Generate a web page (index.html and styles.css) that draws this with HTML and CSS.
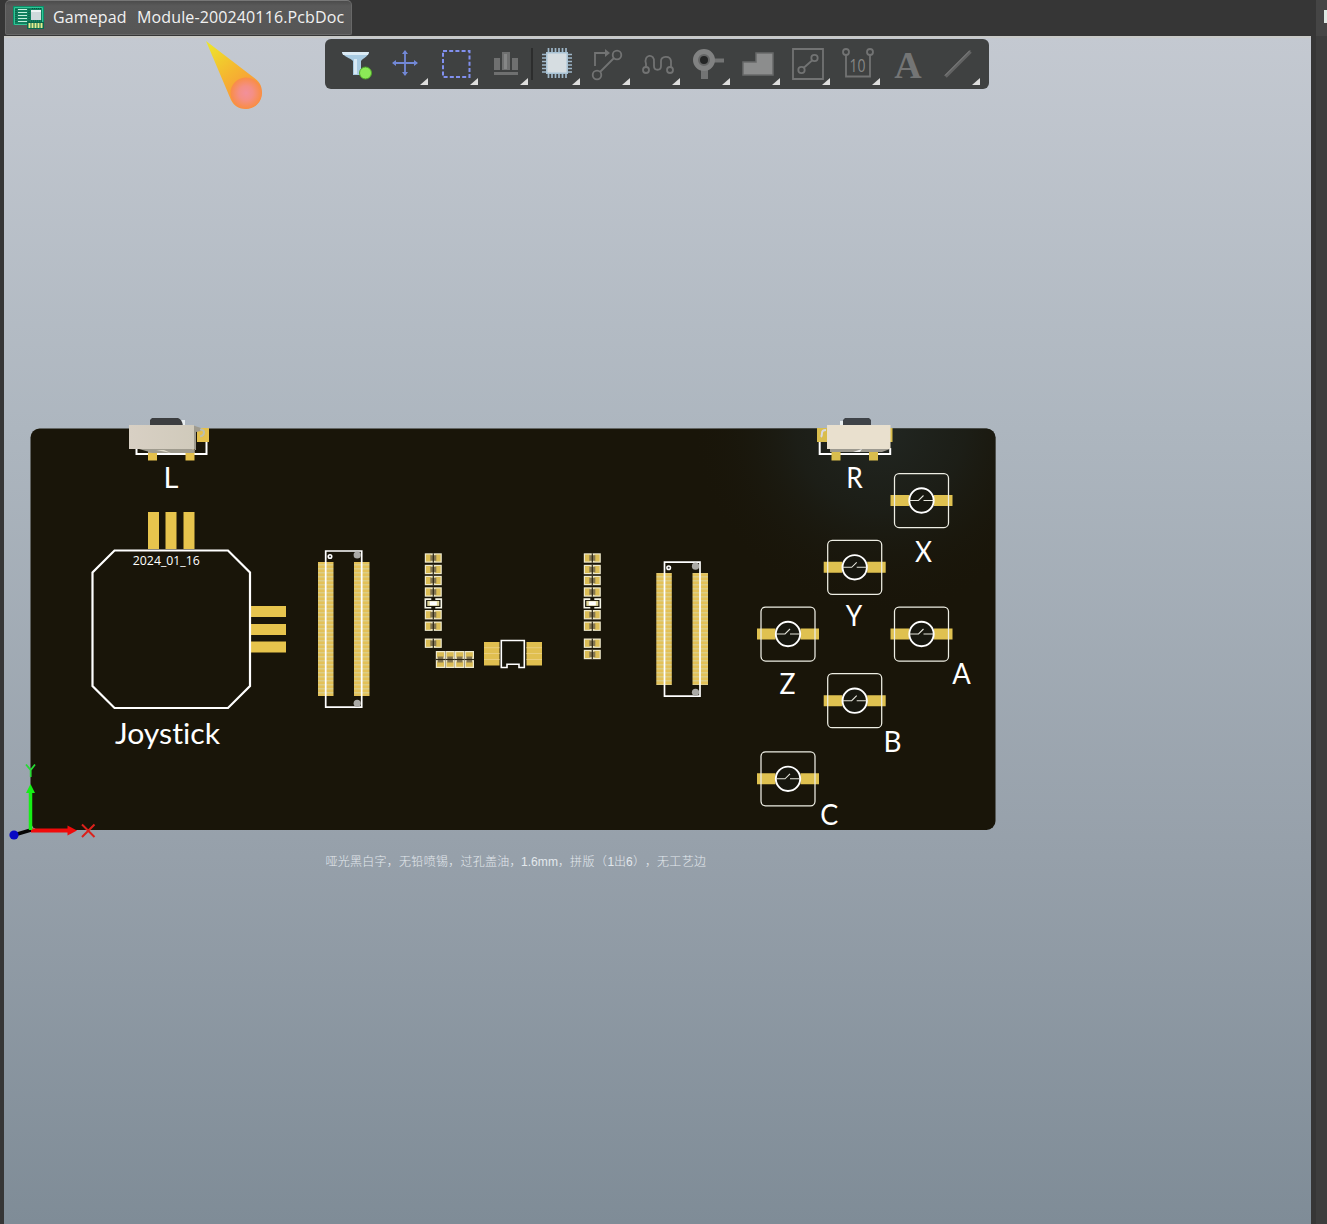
FILE: index.html
```html
<!DOCTYPE html>
<html lang="zh-CN">
<head>
<meta charset="utf-8">
<title>Gamepad Module-200240116.PcbDoc</title>
<link rel="stylesheet" href="styles.css">
</head>
<body>
<div class="window">
  <header class="tabbar">
    <div class="tab">
      <svg class="tab-icon" width="32" height="26" viewBox="0 0 32 26">
        <path d="M0 1h31v23H15v-4H0z" fill="#0b8f69"/>
        <path d="M1.500 2.500h28v17h-28z" fill="#12805f" stroke="#31c596"/>
        <path d="M5 4.500h9M5 7.500h9M5 10.500h9M5 13.500h9M5 16.500h9" stroke="#c5f0de"/>
        <path d="M3 4v14M16 4v14M19 3.500h10M18 16h12" stroke="#0a4f3d" stroke-dasharray="1 1"/>
        <path d="M18 5h10v10H18z" fill="#cfd9dc"/><path d="M18 5h10v2H18z" fill="#eef3f4"/>
        <path d="M14 17h17v7H14z" fill="#07694f"/>
        <path d="M16.500 18v5M19.500 18v5M22.500 18v5M25.500 18v5M28.500 18v5" stroke="#e5ee8e" stroke-width="2"/>
      </svg>
      <span class="tab-name">Gamepad</span>
      <span class="tab-file">Module-200240116.PcbDoc</span>
    </div>
    <div class="side-cap"><i class="side-mark"></i></div>
  </header>

  <main class="workspace">
    <section class="viewport">
      <svg class="scene" width="1307" height="1188" viewBox="4 36 1307 1188">
        <defs>
          <radialGradient id="sheen" gradientUnits="userSpaceOnUse" cx="880" cy="425" r="190">
            <stop offset="0" stop-color="#222723"/><stop offset=".45" stop-color="#1d201a" stop-opacity=".8"/><stop offset="1" stop-color="#191509" stop-opacity="0"/>
          </radialGradient>
          <linearGradient id="flame" gradientUnits="userSpaceOnUse" x1="206" y1="41" x2="250" y2="100">
            <stop offset="0" stop-color="#ece92a"/><stop offset=".55" stop-color="#f5b630"/><stop offset="1" stop-color="#f98f3e"/>
          </linearGradient>
          <radialGradient id="ember"><stop offset="0" stop-color="#f2909a"/><stop offset=".45" stop-color="#f48f85"/><stop offset="1" stop-color="#f98d45"/></radialGradient>
          <linearGradient id="body-l" x2="1" y2="0"><stop offset="0" stop-color="#d8d0c4"/><stop offset="1" stop-color="#d0cabb"/></linearGradient>
          <pattern id="pins" width="16" height="4" patternUnits="userSpaceOnUse">
            <path d="M0 0h16v4H0z" fill="#e3c158"/><path d="M0 0h16v1.500H0z" fill="#dccd86"/>
          </pattern>
          <g id="chip-part">
            <path d="M-8.500-4.700h17v9.400h-17z" fill="#eee9cc"/>
            <path d="M-7.300-3.500h5.300v7h-5.300zM2-3.500h5.300v7H2z" fill="#dbbd56"/>
            <path d="M-3-2.800h6v5.600h-6z" fill="#837551"/>
            <path d="M0-4.700V4.700" stroke="#2b2514" stroke-width="1.200"/>
          </g>
          <g id="diode-part">
            <path d="M-2-4.300h-6v8.600h6M2-4.300h6v8.600H2" fill="none" stroke="#f5f5e8" stroke-width="1.600"/>
            <path d="M-6-2.500H6v5H-6z" fill="#e1d79c"/><path d="M-3.500-2h7v4h-7z" fill="#fff"/>
          </g>
          <g id="resistors">
            <use href="#chip-part" y="558"/><use href="#chip-part" y="569.500"/><use href="#chip-part" y="580.500"/><use href="#chip-part" y="592"/>
            <use href="#diode-part" y="603.400"/><use href="#chip-part" y="614.700"/><use href="#chip-part" y="626.200"/><use href="#chip-part" y="643.200"/>
          </g>
          <g id="push-button">
            <path d="M-31-5.500h18.500v11H-31zM12.500-5.500H31v11H12.500z" fill="#dfc150"/>
            <rect x="-27" y="-27" width="54" height="54" rx="4.500" fill="none" stroke="#eeeee4" stroke-width="1.250"/>
            <circle r="12.200" fill="#17170f" stroke="#fff" stroke-width="1.900"/>
            <path d="M-12 0h9L2-5M2 0h10" fill="none" stroke="#e5e5dc" stroke-width="1.100"/>
          </g>
        </defs>

        <path d="M4 36h1307v2H4z" fill="#c9cac8"/>
        <path d="M206 41L255 78.500C261 83 262 88 262 93A16 16 0 0 1 246 109C239 109 234 106 231 100Z" fill="url(#flame)"/>
        <circle cx="246" cy="93" r="15.500" fill="url(#ember)"/>

        <rect x="30.500" y="428.500" width="965" height="401.500" rx="9" fill="#191509"/>
        <rect x="30.500" y="428.500" width="965" height="401.500" rx="9" fill="url(#sheen)"/>

        <g class="switch-left">
          <path d="M136.500 447v7h70v-14" fill="none" stroke="#fff" stroke-width="2"/>
          <path d="M197 428h12v14h-12zM148 452h9v8.500h-9zM185.500 452h9v8.500h-9z" fill="#e4c04c"/>
          <path d="M148 449h9v4h-9zM185.500 449h9v4h-9z" fill="#b8aa8c"/>
          <path d="M180 420h5v6h-5z" fill="#e8edef"/>
          <path d="M150 426v-6l2-2h26q4 1 5 8z" fill="#3c3e40"/>
          <path d="M139 449l14 4h41l1-4zM192 425l9 3v3l-5 1v18h-4z" fill="#9f9b8e"/>
          <path d="M156 450h8l7 3z" fill="#ddd8c8"/>
          <path d="M129 425h65v24h-65z" fill="url(#body-l)"/>
          <path d="M200 429.500q4 0 4 3t-4 4" fill="none" stroke="#bcbfae" stroke-width="2"/>
        </g>
        <g class="switch-right">
          <path d="M819.700 440v14h70.500v-6" fill="none" stroke="#fff" stroke-width="2"/>
          <path d="M817 428h12v14h-12zM888 428h4.500v14H888zM831.500 452h9v8.500h-9zM869 452h9v8.500h-9z" fill="#d9bd4d"/>
          <path d="M831.500 449h9v3h-9zM869 449h9v3h-9z" fill="#b5a274"/>
          <path d="M840 421h5v5h-5z" fill="#e8edef"/>
          <path d="M843 426v-6l2-2h24l2 2v6z" fill="#3f4348"/>
          <path d="M830 449v3h52l8-3z" fill="#9d9a90"/>
          <path d="M853 452l9-3-2 3z" fill="#eee"/>
          <path d="M827 425h63.500v24H827z" fill="#e9e0ce"/>
          <path d="M826 430q-4 0-4 3t-1 4" fill="none" stroke="#d8d8e0" stroke-width="2"/>
        </g>

        <path d="M148 512h11v37h-11zM165.500 512h11v37h-11zM183.500 512h11v37h-11zM249 606h37v11h-37zM249 624h37v11h-37zM249 641.500h37v11h-37z" fill="#e7c44d"/>
        <path d="M114.500 550.500h113.500l22 22v113.500l-22 22H114.500l-22-22V572.500z" fill="none" stroke="#fff" stroke-width="2.200"/>

        <g class="connector">
          <path d="M318 562h15.500v134H318zM354 562h15.500v134H354z" fill="url(#pins)"/>
          <path d="M325.700 551h36v156.200h-36z" fill="none" stroke="#fff" stroke-width="1.700"/>
          <circle cx="330" cy="556.500" r="1.800" fill="#333" stroke="#fff" stroke-width="1.500"/>
          <circle cx="357.200" cy="555" r="3.600" fill="#aaa9a5"/><circle cx="357.200" cy="703.300" r="3.600" fill="#aaa9a5"/>
        </g>
        <g class="connector">
          <path d="M656.300 573h15.500v112h-15.500zM692.500 573H708v112h-15.500z" fill="url(#pins)"/>
          <path d="M664.500 562.200H700v134h-35.500z" fill="none" stroke="#fff" stroke-width="1.700"/>
          <circle cx="668.700" cy="567.700" r="1.800" fill="#333" stroke="#fff" stroke-width="1.500"/>
          <circle cx="695.500" cy="566.200" r="3.600" fill="#aaa9a5"/><circle cx="695.500" cy="692.300" r="3.600" fill="#aaa9a5"/>
        </g>

        <use href="#resistors" x="433.300"/>
        <use href="#resistors" x="592.300"/><use href="#chip-part" x="592.300" y="654.500"/>
        <g transform="translate(440.500 659.500) rotate(90)">
          <use href="#chip-part"/><use href="#chip-part" y="-9.600"/><use href="#chip-part" y="-19.200"/><use href="#chip-part" y="-28.800"/>
        </g>
        <path d="M484 642h15.500v23.500H484zM526.500 642H542v23.500h-15.500z" fill="#e0bf50"/>
        <path d="M484 647.700h15.500M484 653.500h15.500M484 659.500h15.500M526.500 647.700H542M526.500 653.500H542M526.500 659.500H542" stroke="#eace7c"/>
        <path d="M501.300 640.500h23v27h-5.300v-3.200h-12v3.200h-5.700z" fill="#17150a" stroke="#fff" stroke-width="1.600"/>

        <use href="#push-button" x="921.500" y="500.500"/>
        <use href="#push-button" x="854.700" y="567.300"/>
        <use href="#push-button" x="788" y="634"/>
        <use href="#push-button" x="921.500" y="634"/>
        <use href="#push-button" x="854.700" y="700.700"/>
        <use href="#push-button" x="788" y="778.800"/>

        <g class="silk">
          <text x="171" y="488">L</text>
          <text x="854.500" y="488" textLength="16.500" lengthAdjust="spacingAndGlyphs">R</text>
          <text x="923.500" y="561.500" textLength="17" lengthAdjust="spacingAndGlyphs">X</text>
          <text x="854" y="626" textLength="16.500" lengthAdjust="spacingAndGlyphs">Y</text>
          <text x="787.500" y="693.500" textLength="16" lengthAdjust="spacingAndGlyphs">Z</text>
          <text x="961.500" y="684" textLength="18.500" lengthAdjust="spacingAndGlyphs">A</text>
          <text x="892.500" y="752" textLength="18" lengthAdjust="spacingAndGlyphs">B</text>
          <text x="829.300" y="825" textLength="18" lengthAdjust="spacingAndGlyphs">C</text>
          <text x="167.500" y="743.500" textLength="105" lengthAdjust="spacingAndGlyphs">Joystick</text>
          <text class="date" x="166.300" y="564.500" textLength="67" lengthAdjust="spacingAndGlyphs">2024_01_16</text>
        </g>

        <g class="axes" fill="none">
          <path d="M31 830L14 835" stroke="#050505" stroke-width="3.500"/><circle cx="14" cy="835" r="4.600" fill="#0808c4"/>
          <path d="M31 830.500h38" stroke="#f00b0b" stroke-width="4"/><path d="M67.500 825.500l9.500 5-9.500 5z" fill="#f00b0b"/>
          <path d="M30.500 830v-38" stroke="#16ee16" stroke-width="3.500"/><path d="M26 793l4.500-9 4.500 9z" fill="#16ee16"/>
          <path d="M26 764.500l4.700 5.500 4.300-5.500M30.700 770v7" stroke="#27da35" stroke-width="1.800"/>
          <path d="M82 824.500L94.500 837M94.500 824.500L82 837" stroke="#dc211b" stroke-width="2"/>
        </g>

        <text class="note" y="865.500"><tspan x="325.500" textLength="196">哑光黑白字，无铅喷锡，过孔盖油，</tspan><tspan x="521" textLength="37" lengthAdjust="spacingAndGlyphs">1.6mm</tspan><tspan x="558">，</tspan><tspan x="570" textLength="37">拼版（</tspan><tspan x="607.500">1</tspan><tspan x="614">出</tspan><tspan x="626">6</tspan><tspan x="633">）</tspan><tspan x="645">，</tspan><tspan x="657" textLength="49">无工艺边</tspan></text>
      </svg>

      <nav class="toolbar">
        <svg class="tool" viewBox="0 0 50 50"><path d="M11 13h27c-1 5-6 6-8 9v14h-8V22c-2-3-10-4-11-9z" fill="#a9cbe2"/><path d="M11 13h27l-1 3H12z" fill="#dcebf5"/><path d="M23 20h3v15h-3z" fill="#d8e9f4"/><circle cx="34.500" cy="34" r="6" fill="#8bea57" stroke="#51a62b"/></svg>
        <svg class="tool" viewBox="0 0 50 50"><path d="M12 24h24M24 12v24" stroke="#7288d6" stroke-width="1.800"/><path d="M11 24l4-3v6zM37 24l-4-3v6zM24 11l-3 4h6zM24 37l-3-4h6z" fill="#7288d6"/><path class="more" d="M47 39v7h-8z"/></svg>
        <svg class="tool" viewBox="0 0 50 50"><path d="M12 12h26.500v26H12z" fill="none" stroke="#8190ee" stroke-width="2" stroke-dasharray="4 2.200"/><path class="more" d="M47 39v7h-8z"/></svg>
        <svg class="tool" viewBox="0 0 50 50"><path d="M13 19h6v12h-6zM21 13h8v18h-8zM31 19h6v12h-6zM13 33h24v3H13z" fill="#6f7070"/><path d="M23 15h3v15h-3z" fill="#858686"/><path class="more" d="M47 39v7h-8z"/></svg>
        <i class="divider"></i>
        <svg class="tool" viewBox="0 0 50 50"><path d="M15.500 9v30M19 9v30M22.500 9v30M26 9v30M29.500 9v30M33 9v30M9 15.500h30M9 19h30M9 22.500h30M9 26h30M9 29.500h30M9 33h30" stroke="#9fb7c9" stroke-width="1.700"/><path d="M13 13h22v22H13z" fill="#a9c3d5"/><path d="M14.500 14.500h19v19h-19z" fill="#d6dde1"/><path class="more" d="M47 39v7h-8z"/></svg>
        <svg class="tool" viewBox="0 0 50 50"><g class="line"><circle cx="14" cy="36" r="4.300"/><circle cx="34" cy="16" r="4.300"/><path d="M17 33L31 19M12 27V14h12"/></g><path d="M22 10l5 4-5 4z" fill="#727373"/><path class="more" d="M47 39v7h-8z"/></svg>
        <svg class="tool" viewBox="0 0 50 50"><g class="line"><circle cx="13" cy="31" r="3"/><circle cx="37" cy="31" r="3"/><path d="M13 28v-3c-3-10 9-11 8-2v4c0 5 7 5 7 0v-5c0-5 9-6 10 0v6"/></g><path class="more" d="M47 39v7h-8z"/></svg>
        <svg class="tool" viewBox="0 0 50 50"><path d="M29 19.500h12v4H29zM18 29h7v11h-7z" fill="#737474"/><circle cx="21" cy="21" r="8" fill="#343535" stroke="#818282" stroke-width="6"/><circle cx="21" cy="21" r="5" fill="#242525" stroke="#656666" stroke-width="2"/><path class="more" d="M47 39v7h-8z"/></svg>
        <svg class="tool" viewBox="0 0 50 50"><path d="M10 23h13v-9h17v22H10z" fill="#8c8d8d" stroke="#686969" stroke-width="1.500"/><path class="more" d="M47 39v7h-8z"/></svg>
        <svg class="tool" viewBox="0 0 50 50"><g class="line"><path d="M10 10h30v30H10zM20.500 29L29 21.500"/><circle cx="18.500" cy="31" r="3.200"/><circle cx="31.500" cy="19" r="3.200"/></g><path class="more" d="M47 39v7h-8z"/></svg>
        <svg class="tool" viewBox="0 0 50 50"><g class="line"><circle cx="13" cy="13" r="3"/><circle cx="37" cy="13" r="3"/><path d="M13 16v21.500h24V16"/></g><text class="ten" x="24.500" y="32.500" textLength="16" lengthAdjust="spacingAndGlyphs">10</text><path class="more" d="M47 39v7h-8z"/></svg>
        <svg class="tool" viewBox="0 0 50 50"><text class="letter" x="25" y="38.500">A</text></svg>
        <svg class="tool" viewBox="0 0 50 50"><path d="M12.500 37.500l25-25" stroke="#626363" stroke-width="3.500"/><path d="M12 36.500l25-25" stroke="#7e7f7f"/><path class="more" d="M47 39v7h-8z"/></svg>
      </nav>
    </section>
    <aside class="side-panel"></aside>
  </main>
</div>
</body>
</html>
```
FILE: styles.css
```css
* { box-sizing: border-box; }
body { margin: 0; background: #363636; font-family: "Open Sans", "Noto Sans", sans-serif; }
.window { height: 1224px; display: flex; flex-direction: column; overflow: hidden; }
.tabbar { height: 36px; flex: none; display: flex; justify-content: space-between; padding-left: 5px; background: #363636; }
.tab {
  width: 347px; height: 35px; display: flex; align-items: center; padding: 0 0 1px 8px;
  background: linear-gradient(#4c4c4c, #595959 15%, #565656); border: 1px solid #686868; border-top-color: #777;
  border-radius: 5px 5px 2px 2px; color: #f1f1f1; font-size: 16px; letter-spacing: .13px; white-space: nowrap;
}
.tab-icon { flex: none; margin: 1px 0 0 -1px; }
.tab-name { width: 84px; margin: -1px 0 0 8px; flex: none; }
.tab-file { flex: none; margin-top: -1px; }
.side-cap { width: 11px; padding: 10px 0 0 8px; background: #454545; }
.side-mark { display: block; width: 3px; height: 13px; background: #dfe9e4; }
.workspace { flex: 1; display: flex; justify-content: space-between; padding-left: 4px; }
.viewport {
  position: relative; width: 1307px; height: 1188px;
  background: linear-gradient(#c4c9d1, #adb6bf 33%, #96a0aa 69%, #7f8c97);
}
.side-panel { width: 11px; background: #3d3d3d; }
.scene { display: block; }
.silk { fill: #fff; font: 400 29px Lato, "Open Sans", sans-serif; font-variant-ligatures: none; text-anchor: middle; }
.silk .date { font: 500 13px "Open Sans", "Noto Sans", sans-serif; }
.note { fill: #e3e8ed; font: 300 12px "Liberation Sans", "Noto Sans CJK SC", sans-serif; }
.toolbar {
  position: absolute; left: 321px; top: 3px; width: 664px; height: 50px; padding: 0 6px;
  display: flex; background: #3f4141; border-radius: 6px;
}
.tool { width: 50px; height: 50px; flex: none; }
.divider { width: 2px; height: 32px; margin-top: 9px; flex: none; background: #2c2d2d; }
.more { fill: #dededd; }
.line { fill: none; stroke: #727373; stroke-width: 1.800; }
.ten { fill: #858686; font: 18px "Open Sans", sans-serif; text-anchor: middle; }
.letter { fill: #747575; font: bold 38px "Liberation Serif", serif; text-anchor: middle; }
```
